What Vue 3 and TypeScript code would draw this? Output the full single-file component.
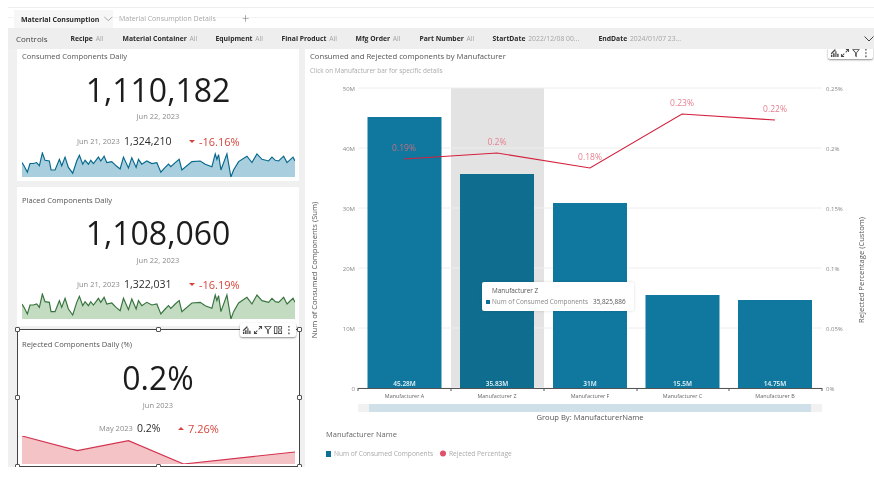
<script setup lang="ts">
const sparkPts: [number, number][] = [[66,125],[72,135],[82,155],[90,128],[100,128],[110,125],[118,135],[127,95],[135,118],[148,120],[153,148],[165,148],[178,115],[185,135],[195,108],[205,140],[218,158],[230,120],[238,102],[248,130],[255,118],[265,130],[272,118],[280,128],[295,108],[302,120],[312,105],[320,125],[335,122],[348,135],[360,145],[370,108],[385,142],[395,110],[408,140],[415,115],[425,130],[440,120],[455,128],[470,125],[482,155],[495,140],[505,130],[512,138],[525,125],[537,115],[545,148],[575,122],[600,120],[615,130],[635,138],[645,98],[650,115],[655,100],[662,148],[680,98],[692,170],[700,148],[715,122],[740,105],[755,125],[770,98],[785,115],[805,120],[815,108],[825,118],[835,120],[850,105],[860,125],[878,108],[884,120]]
const dailyLine = sparkPts.map(p => p.join(',')).join(' ')
const dailyArea = `66,170 ${dailyLine} 884,170`

const cards = [
  { id: 'c1', title: 'Consumed Components Daily', value: '1,110,182', date: 'Jun 22, 2023', prev: 'Jun 21, 2023', prevVal: '1,324,210', delta: '-16.16%', up: false, line: '#07688c', fill: '#a9cfdf', daily: true },
  { id: 'c2', title: 'Placed Components Daily', value: '1,108,060', date: 'Jun 22, 2023', prev: 'Jun 21, 2023', prevVal: '1,322,031', delta: '-16.19%', up: false, line: '#37733f', fill: '#c3dcc1', daily: true },
  { id: 'c3', title: 'Rejected Components Daily (%)', value: '0.2%', date: 'Jun 2023', prev: 'May 2023', prevVal: '0.2%', delta: '7.26%', up: true, line: '#d2334f', fill: '#f3c3c6', daily: false }
]

const monthLine = '66,376 232,420 385,390 550,460 884,424'
const monthArea = `66,460 ${monthLine} 884,460`

const leftTicks = [['50M', 88], ['40M', 148], ['30M', 208], ['20M', 268], ['10M', 328], ['0', 388]] as const
const rightTicks = [['0.25%', 88], ['0.2%', 148], ['0.15%', 208], ['0.1%', 268], ['0.05%', 328], ['0%', 388]] as const
const bars = [
  { x: 367.5, top: 117, name: 'Manufacturer A', label: '45.28M', color: '#10789e' },
  { x: 460, top: 174, name: 'Manufacturer Z', label: '35.83M', color: '#0f6e90' },
  { x: 553, top: 203, name: 'Manufacturer F', label: '31M', color: '#10789e' },
  { x: 645.5, top: 295, name: 'Manufacturer C', label: '15.5M', color: '#10789e' },
  { x: 738, top: 300, name: 'Manufacturer B', label: '14.75M', color: '#10789e' }
]
const xTicks = [358, 451, 544, 637, 729, 822]
const ratePts = [
  { x: 404, y: 159, label: '0.19%', ly: 151, dim: true },
  { x: 497, y: 153, label: '0.2%', ly: 145, dim: false },
  { x: 590, y: 168, label: '0.18%', ly: 160, dim: false },
  { x: 682, y: 114, label: '0.23%', ly: 106, dim: false },
  { x: 775, y: 120, label: '0.22%', ly: 112, dim: false }
]
const rateLine = ratePts.map(p => `${p.x},${p.y}`).join(' ')

const icons: Record<string, string> = {
  chart: 'M1 9.5V7h1.5v2.5zM3.3 9.5V5.5h1.5v4zM5.6 9.5V3.5h1.2v6zM7.6 9.5V6h1.4v3.5zM.8 5.6 5 1.2l1.3 1-4.6 4.4z',
  expand: 'M1 9.5V6.2h1v1.6L4.2 5.6l.7.7-2.2 2.2h1.6v1zM9.5 1v3.3h-1V2.7L6.3 4.9l-.7-.7 2.2-2.2H6.2V1z',
  filter: 'M1 1.2h8.4L6 5.2v4.4L4.4 8.6V5.2zM2.9 2.1l2.4 2.8 2.3-2.8z',
  layout: 'M1 1.2h3.6v8.2H1zM1.9 2.1v6.4h1.8V2.1zM5.5 1.2h4v3.6h-4zM6.4 2.1v1.8h2.2V2.1zM5.5 5.7h4v3.7h-4zM6.4 6.6v1.9h2.2V6.6z',
  more: 'M4.5 1h1.3v1.6H4.5zM4.5 4.5h1.3v1.6H4.5zM4.5 8h1.3v1.6H4.5z'
}
const leftTools = ['chart', 'expand', 'filter', 'layout', 'more']
const rightTools = ['chart', 'expand', 'filter', 'more']
const filters = [
  { k: 'Recipe', v: 'All', c: 'f1' },
  { k: 'Material Container', v: 'All', c: 'f2' },
  { k: 'Equipment', v: 'All', c: 'f3' },
  { k: 'Final Product', v: 'All', c: 'f4' },
  { k: 'Mfg Order', v: 'All', c: 'f5' },
  { k: 'Part Number', v: 'All', c: 'f6' },
  { k: 'StartDate', v: '2022/12/08 00...', c: 'f7' },
  { k: 'EndDate', v: '2024/01/07 23...', c: 'f8' }
]
const handles = ['tl', 'tc', 'tr', 'ml', 'mr', 'bl', 'bc', 'br']
</script>

<template>
  <div class="app">
    <div class="tabs">
      <div class="tab-active">
        <span>Material Consumption</span>
        <svg width="11" height="6" viewBox="0 0 11 6"><path d="M.5.5 5.5 5 10.5.5" fill="none" stroke="#777" stroke-width=".8" /></svg>
      </div>
      <span class="tab-other">Material Consumption Details</span>
      <span class="tab-add">+</span>
    </div>
    <div class="controls">
      <span class="controls-title">Controls</span>
      <span v-for="f in filters" :key="f.k" class="filter" :class="f.c"><b>{{ f.k }}</b> <i>{{ f.v }}</i></span>
      <svg class="controls-chevron" width="10" height="6" viewBox="0 0 10 6"><path d="M.5.5 5 5 9.5.5" fill="none" stroke="#444" stroke-width="1" /></svg>
    </div>
    <div class="main">
      <div class="left">
        <section v-for="c in cards" :key="c.id" class="card" :class="c.id">
          <h3 class="card-title">{{ c.title }}</h3>
          <div class="big">{{ c.value }}</div>
          <div class="date">{{ c.date }}</div>
          <div class="compare">
            <span class="prev">{{ c.prev }}</span>
            <span class="prev-val">{{ c.prevVal }}</span>
            <span class="delta"><span class="tri" :class="{ up: c.up }"></span>{{ c.delta }}</span>
          </div>
          <svg v-if="c.daily" class="spark" viewBox="66 92 818 78" preserveAspectRatio="none">
            <polygon :points="dailyArea" :fill="c.fill" />
            <polyline :points="dailyLine" fill="none" :stroke="c.line" stroke-width="3.5" />
          </svg>
          <svg v-else class="spark" viewBox="66 376 818 84" preserveAspectRatio="none">
            <polygon :points="monthArea" :fill="c.fill" />
            <polyline :points="monthLine" fill="none" :stroke="c.line" stroke-width="3.5" />
          </svg>
        </section>
        <div class="selection">
          <span v-for="h in handles" :key="h" class="handle" :class="h"></span>
        </div>
        <div class="toolbar left-tools">
          <svg v-for="t in leftTools" :key="t" width="10" height="10" viewBox="0 0 10.5 10.5"><path :d="icons[t]" fill="#444" fill-rule="evenodd" /></svg>
        </div>
      </div>
      <section class="panel">
        <h3 class="panel-title">Consumed and Rejected components by Manufacturer</h3>
        <p class="panel-sub">Click on Manufacturer bar for specific details</p>
        <svg class="chart" width="569" height="389" viewBox="305 78 569 389">
          <rect x="451" y="88" width="93" height="300" fill="#e3e3e3" />
          <line v-for="t in leftTicks" :key="t[0]" x1="358" x2="822" :y1="t[1]" :y2="t[1]" stroke="#eeeeee" stroke-width="1" />
          <text v-for="t in leftTicks" :key="'l' + t[0]" x="355" :y="t[1] + 2.5" text-anchor="end" class="tick">{{ t[0] }}</text>
          <text v-for="t in rightTicks" :key="'r' + t[0]" x="826" :y="t[1] + 2.5" class="tick">{{ t[0] }}</text>
          <g v-for="b in bars" :key="b.name">
            <rect :x="b.x" :y="b.top" width="74" :height="388 - b.top" :fill="b.color" />
            <text :x="b.x + 37" y="386" text-anchor="middle" class="bar-label">{{ b.label }}</text>
            <text :x="b.x + 37" y="397.5" text-anchor="middle" class="cat">{{ b.name }}</text>
          </g>
          <line x1="358" x2="822" y1="388.5" y2="388.5" stroke="#555" stroke-width="1" />
          <line v-for="x in xTicks" :key="x" :x1="x" :x2="x" y1="388" y2="391" stroke="#555" stroke-width="1" />
          <polyline :points="rateLine" fill="none" stroke="#d4213d" stroke-width="1.1" />
          <text v-for="p in ratePts" :key="p.x" :x="p.x" :y="p.ly" text-anchor="middle" class="rate" :class="{ dim: p.dim }">{{ p.label }}</text>
          <rect x="358" y="404" width="464" height="8" fill="#f1f1f1" />
          <rect x="369" y="404" width="442" height="8" fill="#cfe0e8" />
          <text x="590" y="420" text-anchor="middle" class="group">Group By: ManufacturerName</text>
          <text x="326" y="437" class="legend-title">Manufacturer Name</text>
          <rect x="326" y="451" width="5" height="6" fill="#106f96" />
          <text x="334" y="456" class="legend">Num of Consumed Components</text>
          <circle cx="443" cy="453.5" r="3" fill="#e0506a" />
          <text x="449" y="456" class="legend">Rejected Percentage</text>
          <text transform="translate(317 270) rotate(-90)" text-anchor="middle" class="axis-title">Num of Consumed Components (Sum)</text>
          <text transform="translate(864 270) rotate(-90)" text-anchor="middle" class="axis-title">Rejected Percentage (Custom)</text>
        </svg>
        <div class="tooltip">
          <div class="tip-name">Manufacturer Z</div>
          <div class="tip-row"><span class="tip-key"></span><span class="tip-label">Num of Consumed Components</span><span class="tip-val">35,825,886</span></div>
        </div>
        <div class="toolbar right-tools">
          <svg v-for="t in rightTools" :key="t" width="10" height="10" viewBox="0 0 10.5 10.5"><path :d="icons[t]" fill="#444" fill-rule="evenodd" /></svg>
        </div>
      </section>
    </div>
  </div>
</template>

<style scoped>
.app {
  width: 874px;
  height: 479px;
  overflow: hidden;
  box-sizing: border-box;
  padding: 7px 0 0 8px;
  background: #fff;
  font-family: "Open Sans", "Noto Sans", sans-serif;
  color: #333;
  filter: blur(0.3px);
}
.tabs {
  height: 21px;
  box-sizing: border-box;
  border-top: 1px solid #eeeeee;
  padding: 2px 0 0 6px;
  display: flex;
  align-items: stretch;
  font-size: 7px;
  background: linear-gradient(#fff 9.5px, #f3f3f3 9.5px, #f3f3f3 10.5px, #fff 10.5px);
}
.tab-active {
  width: 99px;
  box-sizing: border-box;
  padding: 0 0 0 7px;
  background: #f6f6f6;
  display: flex;
  align-items: center;
  gap: 5px;
  font-weight: 700;
  color: #2b2b2b;
  white-space: nowrap;
}
.tab-other {
  margin-left: 6px;
  line-height: 18px;
  color: #a8a8a8;
  background: #fff;
  height: 18px;
  white-space: nowrap;
}
.tab-add {
  margin-left: 26px;
  line-height: 17px;
  font-size: 13px;
  color: #777;
  font-weight: 300;
}
.controls {
  height: 21px;
  background: #eeeeee;
  display: flex;
  align-items: center;
  padding-left: 8px;
  font-size: 6.8px;
  white-space: nowrap;
  position: relative;
}
.controls-title { font-size: 8px; color: #444; width: 54.5px; }
.filter b { font-weight: 700; color: #2b2b2b; }
.filter i { font-style: normal; color: #a5a5a5; margin-left: 1px; }
.f1 { width: 52px; }
.f2 { width: 93px; }
.f3 { width: 66px; }
.f4 { width: 74px; }
.f5 { width: 64px; }
.f6 { width: 73px; }
.f7 { width: 106px; }
.controls-chevron { position: absolute; right: 0; top: 8px; }
.main {
  height: 418px;
  display: flex;
  background: #f0f0f0;
  padding-left: 9px;
  position: relative;
  overflow: hidden;
}
.left {
  width: 282px;
  margin-right: 6px;
  display: flex;
  flex-direction: column;
  gap: 5px;
  position: relative;
}
.card {
  background: #fff;
  flex: none;
  box-sizing: border-box;
  padding: 0 5px;
  display: flex;
  flex-direction: column;
  overflow: hidden;
}
.c1 { height: 132px; }
.c2 { height: 139px; margin-top: 1px; padding-top: 6px; }
.c3 { height: 138px; margin-top: -1px; padding-top: 7px; }
.card-title {
  margin: 0;
  font-size: 7.6px;
  line-height: 14px;
  font-weight: 400;
  color: #555;
}
.big {
  text-align: center;
  font-size: 32px;
  line-height: 36px;
  height: 36px;
  color: #1c1c1c;
  font-weight: 400;
}
.c1 .big { margin-top: 9px; }
.c2 .big { margin-top: 8px; }
.c3 .big { margin-top: 9px; }
.date {
  text-align: center;
  font-size: 7.5px;
  line-height: 12px;
  color: #8a8a8a;
}
.c1 .date { margin-top: 2px; }
.c2 .date { margin-top: 3px; }
.c3 .date { margin-top: 3px; }
.compare {
  height: 14px;
  display: flex;
  align-items: center;
  white-space: nowrap;
  padding-left: 55px;
}
.c3 .compare { padding-left: 77px; }
.c1 .compare { margin-top: 12px; }
.c2 .compare { margin-top: 11px; }
.c3 .compare { margin-top: 10px; }
.prev { font-size: 7.5px; color: #8a8a8a; width: 47px; }
.c3 .prev { width: 38px; }
.prev-val { font-size: 10.5px; color: #2b2b2b; width: 65px; }
.c3 .prev-val { width: 41px; }
.delta { font-size: 11px; color: #d7443c; display: inline-flex; align-items: center; }
.tri {
  width: 0;
  height: 0;
  border-left: 3px solid transparent;
  border-right: 3px solid transparent;
  border-top: 3px solid #d7443c;
  margin-right: 4px;
}
.tri.up { border-top: 0; border-bottom: 3px solid #d7443c; }
.spark { width: 273px; height: 25px; display: block; flex: none; }
.c1 .spark { margin-top: 4px; }
.c2 .spark { margin-top: 2px; height: 26px; }
.c3 .spark { margin-top: 1px; height: 28px; }
.selection {
  position: absolute;
  left: 0;
  top: 280px;
  width: 283px;
  height: 138px;
  box-sizing: border-box;
  border: 1px solid #444;
  pointer-events: none;
}
.handle {
  position: absolute;
  width: 3px;
  height: 3px;
  background: #fff;
  border: 1px solid #555;
  border-radius: 1px;
}
.tl { left: -3px; top: -3px; }
.tc { left: 138px; top: -3px; }
.tr { right: -3px; top: -3px; }
.ml { left: -3px; top: 65px; }
.mr { right: -3px; top: 65px; }
.bl { left: -3px; bottom: -3px; }
.bc { left: 138px; bottom: -3px; }
.br { right: -3px; bottom: -3px; }
.toolbar {
  position: absolute;
  display: flex;
  align-items: center;
  justify-content: space-around;
  background: #fff;
  border-radius: 2px;
  box-shadow: 0 1px 2px rgba(0, 0, 0, .45);
  box-sizing: border-box;
  padding: 0 2px;
}
.left-tools { left: 223px; top: 274px; width: 56px; height: 14px; }
.right-tools { right: 1px; top: -2px; width: 45px; height: 12px; }
.panel {
  flex: 1;
  background: #fff;
  position: relative;
  min-width: 0;
}
.panel-title {
  margin: 0;
  padding-left: 5px;
  font-size: 7.7px;
  line-height: 14px;
  font-weight: 400;
  color: #555;
}
.panel-sub {
  margin: 0;
  padding-left: 5px;
  font-size: 6.4px;
  line-height: 15px;
  height: 15px;
  color: #aaa;
}
.chart { display: block; }
.tick { font-size: 6px; fill: #888; }
.bar-label { font-size: 6.5px; fill: #eaf6fb; font-weight: 600; }
.cat { font-size: 5.4px; fill: #666; }
.rate { font-size: 8.5px; fill: #e77f8f; }
.rate.dim { fill: #c0707f; }
.group { font-size: 7.6px; fill: #555; }
.legend-title { font-size: 7.5px; fill: #666; }
.legend { font-size: 6.6px; fill: #aaa; }
.axis-title { font-size: 7.6px; fill: #555; }
.tooltip {
  position: absolute;
  left: 177px;
  top: 233px;
  width: 152px;
  height: 29px;
  box-sizing: border-box;
  padding: 3px 0 0 4px;
  background: #fff;
  border-radius: 2px;
  box-shadow: 0 0 3px rgba(0, 0, 0, .15);
  font-size: 6.4px;
  line-height: 11px;
  white-space: nowrap;
}
.tip-name { padding-left: 6px; color: #555; }
.tip-row { display: flex; align-items: center; }
.tip-key { width: 4px; height: 4px; background: #106f96; margin-right: 2px; }
.tip-label { color: #888; width: 101px; }
.tip-val { color: #555; }
</style>

<style>
html, body { background: #fff; }
</style>
